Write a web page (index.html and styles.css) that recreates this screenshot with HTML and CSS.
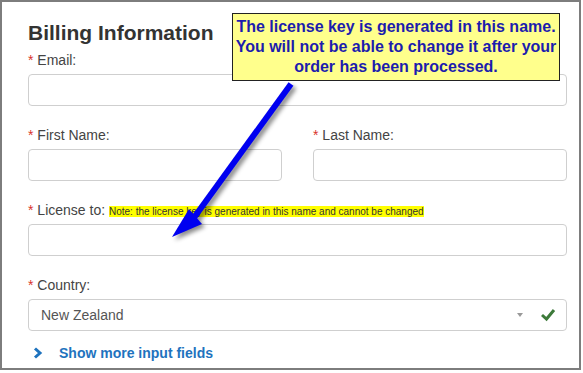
FILE: index.html
```html
<!DOCTYPE html>
<html lang="en">
<head>
  <meta charset="UTF-8" />
  <meta name="viewport" content="width=device-width, initial-scale=1" />
  <title>Billing Information</title>
  <link rel="stylesheet" href="styles.css">
</head>
<body>
  <div class="frame">
    <h2>Billing Information</h2>

    <form class="billing-form">
      <div class="group">
        <label for="email"><span class="req">*</span> Email:</label>
        <input type="text" id="email" />
      </div>

      <div class="group row">
        <div>
          <label for="first-name"><span class="req">*</span> First Name:</label>
          <input type="text" id="first-name" />
        </div>
        <div>
          <label for="last-name"><span class="req">*</span> Last Name:</label>
          <input type="text" id="last-name" />
        </div>
      </div>

      <div class="group">
        <label for="license"><span class="req">*</span> License to: <span class="note">Note: the license key is generated in this name and cannot be changed</span></label>
        <input type="text" id="license" />
      </div>

      <div class="group group-last">
        <label><span class="req">*</span> Country:</label>
        <div class="select-box">
          <span class="select-value">New Zealand</span>
          <span class="caret"></span>
          <svg class="check" width="16" height="14" viewBox="0 0 16 14">
            <polyline points="2,7 6.5,11 14,2" fill="none" stroke="#3d7a3a" stroke-width="3" />
          </svg>
        </div>
      </div>

      <a href="#" class="show-more">
        <svg width="10" height="12" viewBox="0 0 10 12">
          <polyline points="2,1.5 7,6 2,10.5" fill="none" stroke="#1e73be" stroke-width="3" />
        </svg>
        <span>Show more input fields</span>
      </a>
    </form>

    <!-- annotation drawn over the form -->
    <svg class="arrow" width="583" height="373" viewBox="0 0 583 373">
      <line x1="291" y1="84" x2="193" y2="219" stroke="#0000f0" stroke-width="6" />
      <polygon points="172,237 189,209 202,224" fill="#0000f0" />
    </svg>

    <div class="callout">
      The license key is generated in this name.<br>
      You will not be able to change it after your<br>
      order has been processed.
    </div>
  </div>
</body>
</html>
```

FILE: styles.css
```css
body {
  margin: 0;
  font-family: 'Liberation Sans', Arial, sans-serif;
  background: #fff;
  color: #333;
}

.frame {
  position: relative;
  width: 581px;
  height: 370px;
  box-sizing: border-box;
  border: 2px solid #7d7d7d;
  padding: 18px 12px 0 26px;
  overflow: hidden;
}

h2 {
  margin: 0 0 4px;
  font-size: 21px;
  line-height: 26px;
  font-weight: bold;
  color: #333;
}

.group {
  margin-bottom: 19px;
}

.group-last {
  margin-bottom: 12px;
}

.row {
  display: grid;
  grid-template-columns: 1fr 1fr;
  column-gap: 31px;
}

label {
  display: block;
  font-size: 14px;
  line-height: 20px;
  margin-bottom: 4px;
  color: #444;
  white-space: nowrap;
}

.req {
  color: #d9342b;
}

.note {
  font-size: 10px;
  line-height: 1;
  background: #ffff00;
  color: #333;
}

input {
  display: block;
  width: 100%;
  height: 32px;
  box-sizing: border-box;
  border: 1px solid #cfcfcf;
  border-radius: 4px;
  padding: 6px 12px;
  font-family: inherit;
  font-size: 14px;
  background: #fff;
}

.select-box {
  display: flex;
  align-items: center;
  height: 32px;
  box-sizing: border-box;
  border: 1px solid #cfcfcf;
  border-radius: 4px;
  padding: 0 10px 0 12px;
  font-size: 14px;
  color: #555;
}

.select-value {
  flex: 1;
}

.caret {
  width: 0;
  height: 0;
  border-left: 3px solid transparent;
  border-right: 3px solid transparent;
  border-top: 4px solid #999;
  margin-right: 17px;
}

.check {
  display: block;
}

.show-more {
  display: flex;
  align-items: center;
  height: 20px;
  padding-left: 5px;
  text-decoration: none;
  color: #1e73be;
  font-size: 14px;
  font-weight: bold;
}

.show-more svg {
  margin-right: 16px;
}

.arrow {
  position: absolute;
  left: -2px;
  top: -2px;
  pointer-events: none;
  filter: drop-shadow(3px 3px 2px rgba(0, 0, 0, 0.45));
}

.callout {
  position: absolute;
  left: 230px;
  top: 11px;
  width: 328px;
  height: 68px;
  box-sizing: border-box;
  border: 1px solid #222;
  background: #ffff8c;
  color: #1c1cae;
  font-size: 16px;
  line-height: 20px;
  font-weight: bold;
  text-align: center;
  padding-top: 3px;
}
```
